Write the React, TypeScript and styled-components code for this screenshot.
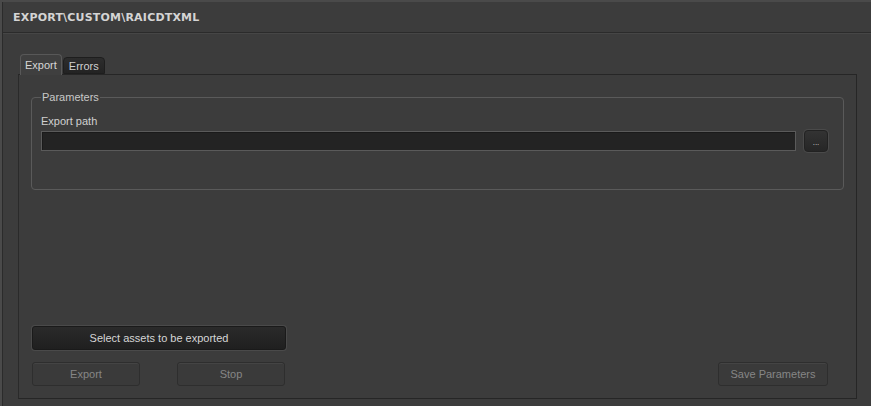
import React from "react";
import styled, { createGlobalStyle } from "styled-components";

const Global = createGlobalStyle`
  html, body { margin: 0; padding: 0; background: #3c3c3c; }
  body { font-family: "Liberation Sans", Arial, sans-serif; font-size: 11px; }
`;

const Window = styled.div`
  width: 871px;
  height: 406px;
  box-sizing: border-box;
  padding-top: 2px;
  background: #4a4a4a;
  display: flex;
  flex-direction: column;
`;

const Frame = styled.div`
  flex: 1;
  margin-left: 2px;
  border-left: 1px solid #2b2b2b;
  background: #3c3c3c;
  display: flex;
  flex-direction: column;
`;

const TitleBar = styled.div`
  height: 30px;
  display: flex;
  align-items: center;
  padding-left: 10px;
  border-bottom: 1px solid #2b2b2b;
  box-shadow: 0 1px 0 #464646;
  font-family: "DejaVu Sans", sans-serif;
  font-weight: bold;
  font-size: 11px;
  letter-spacing: 0.2px;
  color: #d4d4d4;
`;

const Content = styled.div`
  flex: 1;
  padding: 21px 0 0 15px;
  display: flex;
  flex-direction: column;
`;

const TabStrip = styled.div`
  height: 20px;
  display: flex;
  align-items: flex-end;
  padding-left: 2px;
  gap: 1px;
`;

const Tab = styled.div<{ $active?: boolean }>`
  box-sizing: border-box;
  height: ${(p) => (p.$active ? "21px" : "17px")};
  margin-bottom: ${(p) => (p.$active ? "-1px" : "0")};
  padding: 0 ${(p) => (p.$active ? "4px" : "5px")};
  display: flex;
  align-items: center;
  border-radius: 4px 4px 0 0;
  border: 1px solid ${(p) => (p.$active ? "#585858" : "#1e1e1e")};
  border-bottom: ${(p) => (p.$active ? "none" : "1px solid #1e1e1e")};
  background: ${(p) =>
    p.$active ? "#3f3f3f" : "linear-gradient(#2d2d2d, #232323)"};
  color: ${(p) => (p.$active ? "#d6d6d6" : "#d0d0d0")};
  font-size: 11px;
  position: relative;
  z-index: ${(p) => (p.$active ? 2 : 1)};
`;

const TabPanel = styled.div`
  width: 839px;
  height: 325px;
  box-sizing: border-box;
  border: 1px solid #262626;
  border-left-color: #2a2a2a;
  display: flex;
  flex-direction: column;
  padding: 22px 12px 12px 12px;
`;

const Group = styled.div`
  position: relative;
  box-sizing: border-box;
  height: 93px;
  border: 1px solid #5a5a5a;
  border-radius: 4px;
  padding: 16px 15px 0 9px;
  display: flex;
  flex-direction: column;
`;

const Legend = styled.span`
  position: absolute;
  top: -8px;
  left: 9px;
  padding: 0 1px;
  background: #3c3c3c;
  color: #c8c8c8;
  font-size: 11px;
  line-height: 14px;
`;

const Label = styled.div`
  color: #d0d0d0;
  font-size: 11px;
  line-height: 14px;
  height: 16px;
`;

const PathRow = styled.div`
  display: flex;
  align-items: center;
  gap: 8px;
`;

const PathInput = styled.div`
  box-sizing: border-box;
  width: 756px;
  height: 20px;
  background: #232323;
  border: 1px solid #5a5a5a;
  box-shadow: inset 1px 1px 0 #1a1a1a;
`;

const BrowseButton = styled.div`
  box-sizing: border-box;
  width: 24px;
  height: 22px;
  border-radius: 4px;
  border: 1px solid #222;
  box-shadow: 0 0 0 1px #4a4a4a;
  background: linear-gradient(#333, #262626);
  color: #d8d8d8;
  font-size: 8px;
  display: flex;
  align-items: center;
  justify-content: center;
  padding-top: 3px;
`;

const Spacer = styled.div`
  flex: 1;
`;

const Button = styled.div<{ $primary?: boolean; $width: number }>`
  box-sizing: border-box;
  width: ${(p) => p.$width}px;
  height: 24px;
  margin-left: 1px;
  border-radius: 3px;
  display: flex;
  align-items: center;
  justify-content: center;
  font-size: 11px;
  ${(p) =>
    p.$primary
      ? `
    background: linear-gradient(#2a2a2a, #1f1f1f);
    border: 1px solid #1a1a1a;
    box-shadow: 0 0 0 1px #4a4a4a;
    color: #d6d6d6;
  `
      : `
    background: #3a3a3a;
    border: 1px solid #2e2e2e;
    box-shadow: inset 0 1px 0 #444;
    color: #868686;
  `}
`;

const ButtonRow = styled.div`
  display: flex;
  align-items: center;
  margin-top: 12px;
  padding-right: 16px;
  gap: 36px;
`;

export default function App() {
  return (
    <>
      <Global />
      <Window>
        <Frame>
          <TitleBar>EXPORT\CUSTOM\RAICDTXML</TitleBar>
          <Content>
            <TabStrip>
              <Tab $active>Export</Tab>
              <Tab>Errors</Tab>
            </TabStrip>
            <TabPanel>
              <Group>
                <Legend>Parameters</Legend>
                <Label>Export path</Label>
                <PathRow>
                  <PathInput />
                  <BrowseButton>...</BrowseButton>
                </PathRow>
              </Group>
              <Spacer />
              <Button $primary $width={254}>Select assets to be exported</Button>
              <ButtonRow>
                <Button $width={108}>Export</Button>
                <Button $width={108}>Stop</Button>
                <Spacer />
                <Button $width={110}>Save Parameters</Button>
              </ButtonRow>
            </TabPanel>
          </Content>
        </Frame>
      </Window>
    </>
  );
}
